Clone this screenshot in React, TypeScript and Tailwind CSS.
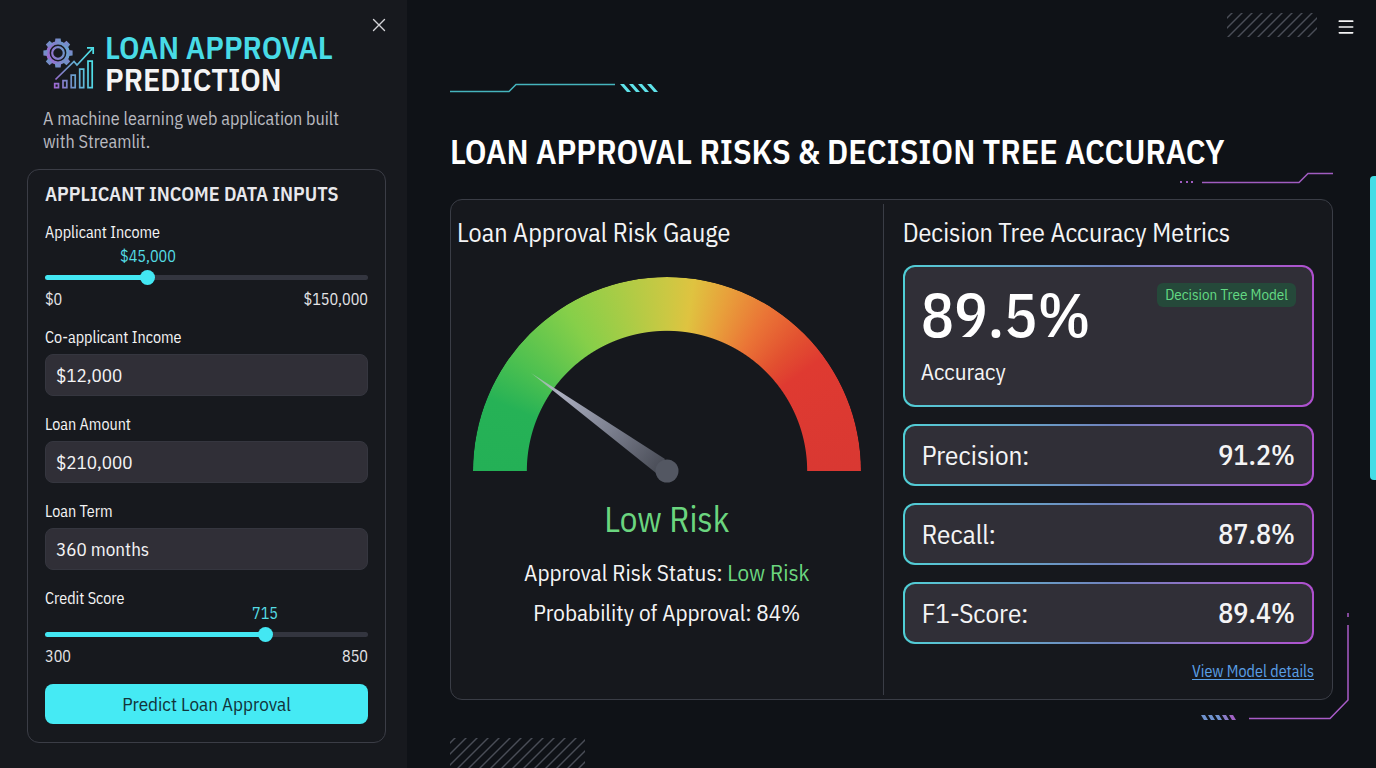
import { useState } from "react";
import { Menu } from "lucide-react";

const Logo = () => (
  <svg viewBox="0 0 52 52" className="w-[52px] h-[52px] shrink-0" fill="none" aria-hidden="true">
    <defs>
      <linearGradient id="logo" gradientUnits="userSpaceOnUse" x1="0" y1="34" x2="46" y2="22">
        <stop offset="0" stopColor="#b455d6" />
        <stop offset="0.5" stopColor="#7290c8" />
        <stop offset="1" stopColor="#4fdfe8" />
      </linearGradient>
      <mask id="gear">
        <rect width="52" height="52" fill="#fff" />
        <circle cx="15" cy="16" r="8.4" fill="#000" />
      </mask>
    </defs>
    <g fill="url(#logo)" mask="url(#gear)">
      <circle cx="15" cy="16" r="11.8" />
      {[0, 45, 90, 135, 180, 225, 270, 315].map(angle => (
        <path key={angle} d="M11.9 5.5 L12.4 1.4 H17.6 L18.1 5.5 Z" transform={`rotate(${angle} 15 16)`} />
      ))}
    </g>
    <circle cx="15" cy="16" r="5.8" stroke="url(#logo)" strokeWidth="2.2" />
    <g stroke="url(#logo)" strokeWidth="1.7">
      <path d="M12.5 42.5 L31 24.500 L34 28 L49.5 11.5" />
      <path d="M44 10.8 H50.2 V17" />
      <path d="M11.7 46.7 h3.8 v4 h-3.8 z" />
      <path d="M20 43.7 h3.8 v7 h-3.8 z" />
      <path d="M28.2 38.2 h4 v12.5 h-4 z" />
      <path d="M36.7 32.2 h4 v18.5 h-4 z" />
      <path d="M45 24.2 h4.2 v26.5 h-4.2 z" />
    </g>
  </svg>
);

const Hatch = ({ id, spacing, className }: any) => (
  <svg className={className} aria-hidden="true">
    <defs>
      <pattern id={id} width={spacing} height="12" patternUnits="userSpaceOnUse" patternTransform="skewX(-45)">
        <path d="M5 0 V12" stroke="#4a4d57" strokeWidth="2" />
      </pattern>
    </defs>
    <rect width="100%" height="100%" fill={`url(#${id})`} />
  </svg>
);

const SliderField = ({ id, label, readout, start, min, max, readoutClass }: any) => {
  const [position, setPosition] = useState(start);

  return (
    <div>
      <label htmlFor={id} className="block text-base leading-5">{label}</label>
      <div className={`relative h-5 ${readoutClass}`}>
        <output
          htmlFor={id}
          className="absolute -translate-x-1/2 text-base leading-5 text-[#55dce4]"
          style={{ left: `calc(${position}% + ${(50 - position) * 0.15}px)` }}
        >
          {readout}
        </output>
      </div>
      <input
        id={id}
        type="range"
        min={0}
        max={100}
        value={position}
        aria-valuetext={readout}
        onChange={e => setPosition(Number(e.target.value))}
        className="block mt-1 w-full h-[14px] appearance-none bg-transparent [&::-webkit-slider-runnable-track]:h-[5px] [&::-webkit-slider-runnable-track]:rounded-full [&::-webkit-slider-runnable-track]:bg-(image:--track) [&::-webkit-slider-thumb]:appearance-none [&::-webkit-slider-thumb]:-mt-[5px] [&::-webkit-slider-thumb]:size-[15px] [&::-webkit-slider-thumb]:rounded-full [&::-webkit-slider-thumb]:bg-[#43e7f3]"
        style={{ "--track": `linear-gradient(to right, #43e7f3 ${position}%, #33353f ${position}%)` } as any}
      />
      <div className="mt-[5px] flex justify-between text-base leading-5 text-[#e4e4e7]">
        <span>{min}</span>
        <span>{max}</span>
      </div>
    </div>
  );
};

const TextField = ({ id, label, value }: any) => (
  <div>
    <label htmlFor={id} className="block text-base leading-5">{label}</label>
    <input
      id={id}
      type="text"
      defaultValue={value}
      className="mt-[7px] block w-full h-[42px] rounded-lg border border-[#35363f] bg-[#302f37] px-2.5 text-[19px] text-[#f4f4f5]"
    />
  </div>
);

const MetricRow = ({ label, value }: any) => (
  <div className="rounded-xl bg-linear-to-r from-[#4fcfd6] via-[#6f83bd] to-[#b04fd0] p-[2px]">
    <dl className="flex h-[58px] items-center justify-between rounded-[10px] bg-[#302f37] px-[17px]">
      <dt className="text-[27px]">{label}</dt>
      <dd className="text-[28px] font-medium">{value}</dd>
    </dl>
  </div>
);

const Gauge = () => (
  <div className="relative mx-auto aspect-[2/1] w-[388px] max-w-full">
    <div className="h-full w-full rounded-t-full bg-[conic-gradient(from_270deg_at_50%_100%,#24b056_0deg,#26b256_22deg,#4cc050_36deg,#86cf49_58deg,#a9cc46_75deg,#cbc843_90deg,#dfc340_98deg,#e8a03b_109deg,#ea7536_122deg,#e25030_135deg,#df3a31_144deg,#d93832_180deg)] [mask-image:radial-gradient(farthest-side_at_50%_100%,transparent_72%,#000_72.5%)]" />
    <svg viewBox="0 0 388 206" className="absolute left-0 top-0 w-full overflow-visible" aria-hidden="true">
      <defs>
        <linearGradient id="needle" gradientUnits="userSpaceOnUse" x1="58" y1="96" x2="190" y2="192">
          <stop offset="0" stopColor="#c4c6d2" stopOpacity="0.5" />
          <stop offset="0.2" stopColor="#aeb1c2" />
          <stop offset="0.6" stopColor="#7b7f8e" />
          <stop offset="1" stopColor="#474a54" />
        </linearGradient>
      </defs>
      <path d="M58 96 L192 182 L183 196 Z" fill="url(#needle)" />
      <circle cx="194" cy="194" r="11.5" fill="#535762" />
    </svg>
  </div>
);

export default function App() {
  const metrics = [
    { label: "Precision:", value: "91.2%" },
    { label: "Recall:", value: "87.8%" },
    { label: "F1-Score:", value: "89.4%" }
  ];

  return (
    <div className="relative flex min-h-screen bg-[#0f1217] font-['IBM_Plex_Sans_Condensed','Roboto_Condensed',Roboto,sans-serif] text-[#f4f4f5]">
      <aside className="w-[407px] shrink-0 bg-[#17191e] pl-[27px] pr-[21px] pt-[18px] pb-6">
        <div className="flex justify-end">
          <button type="button" aria-label="Close sidebar" className="text-[#d4d4d8]">
            <svg viewBox="0 0 14 14" className="size-3.5" stroke="currentColor" strokeWidth="1.4" strokeLinecap="round">
              <path d="M1.500 1.500 L12.500 12.500 M12.500 1.500 L1.500 12.500" />
            </svg>
          </button>
        </div>

        <div className="-mt-px px-4">
          <div className="flex items-center gap-2.5">
            <Logo />
            <h1 className="text-[32px] font-semibold leading-8 whitespace-nowrap">
              <span className="block text-[#48dbe6]">LOAN APPROVAL</span>
              <span className="block">PREDICTION</span>
            </h1>
          </div>
          <p className="mt-3 text-lg leading-[23px] text-[#b9bac0]">
            A machine learning web application built with Streamlit.
          </p>
        </div>

        <form className="mt-4 rounded-xl border border-[#3b3d46] px-[17px] pt-3 pb-[18px]" onSubmit={e => e.preventDefault()}>
          <h2 className="text-xl font-semibold leading-6 text-[#e8e8ec]">APPLICANT INCOME DATA INPUTS</h2>
          <div className="mt-4 flex flex-col gap-[18px]">
            <SliderField id="income" label="Applicant Income" readout="$45,000" start={31} min="$0" max="$150,000" readoutClass="mt-1" />
            <TextField id="co-income" label="Co-applicant Income" value="$12,000" />
            <TextField id="amount" label="Loan Amount" value="$210,000" />
            <TextField id="term" label="Loan Term" value="360 months" />
            <SliderField id="score" label="Credit Score" readout="715" start={69} min="300" max="850" readoutClass="-mt-[5px]" />
            <button type="submit" className="h-10 rounded-lg bg-[#45eaf4] text-[19px] text-[#12343a]">
              Predict Loan Approval
            </button>
          </div>
        </form>
      </aside>

      <main className="flex min-w-0 flex-1 flex-col pl-[43px] pr-[43px]">
        <header className="-mr-[23px] flex items-center justify-end gap-[19px] pt-[13px]">
          <Hatch id="hatch-top" spacing="10" className="h-6 w-[90px]" />
          <button type="button" aria-label="Open menu" className="pt-1">
            <Menu className="size-5" />
          </button>
        </header>

        <svg viewBox="0 0 210 10" className="mt-[46px] h-2.5 w-[210px]" fill="none" aria-hidden="true">
          <path d="M0 8.5 H59 L66 1.5 H165" stroke="#45b4bd" strokeWidth="1.5" />
          <path d="M170 1 h4 l7 8 h-4 z M179 1 h4 l7 8 h-4 z M188 1 h4 l7 8 h-4 z M197 1 h4 l7 8 h-4 z" fill="#5fe3ea" />
        </svg>

        <h2 className="mt-[38px] text-[34px] font-semibold leading-10 text-white">
          LOAN APPROVAL RISKS &amp; DECISION TREE ACCURACY
        </h2>
        <svg viewBox="0 0 154 12" className="mt-px ml-auto h-3 w-[154px]" fill="none" stroke="#a05cc0" strokeWidth="1.5" aria-hidden="true">
          <path d="M1 10 h2 M7 10 h2 M12 10 h2" strokeWidth="2" />
          <path d="M23 10.5 H120 L129 1.5 H154" />
        </svg>

        <div className="relative mt-[15px]">
          <div className="grid grid-cols-[49fr_51fr] rounded-xl border border-[#3a3d46] bg-[#16181d]">
            <section className="px-1.5 pt-3.5 pb-[73px] text-center">
              <h3 className="text-left text-[26px] leading-9">Loan Approval Risk Gauge</h3>
              <div className="mt-[27px]">
                <Gauge />
              </div>
              <p className="mt-[26px] text-[35px] leading-[44px] text-[#6bd57f]">Low Risk</p>
              <p className="mt-[17px] text-[23px] leading-7">
                Approval Risk Status: <span className="text-[#6bd57f]">Low Risk</span>
              </p>
              <p className="mt-3 text-[23px] leading-7">Probability of Approval: 84%</p>
            </section>

            <section className="my-1 border-l border-[#3a3d46] pl-[19px] pr-[18px] pt-2.5">
              <h3 className="text-[26px] leading-9">Decision Tree Accuracy Metrics</h3>
              <div className="mt-[15px] flex flex-col gap-[17px]">
                <div className="rounded-xl bg-linear-to-r from-[#4fcfd6] via-[#6f83bd] to-[#b04fd0] p-[2px]">
                  <div className="flex h-[138px] items-start justify-between rounded-[10px] bg-[#302f37] px-4 pt-3">
                    <div>
                      <p className="text-[62px] font-medium leading-[70px] text-white">89.5%</p>
                      <p className="mt-1.5 text-[23px] leading-8">Accuracy</p>
                    </div>
                    <span className="mt-1 rounded-md bg-[#25493a] px-2 text-[15px] leading-6 text-[#63d883]">Decision Tree Model</span>
                  </div>
                </div>
                {metrics.map(metric => (
                  <MetricRow key={metric.label} {...metric} />
                ))}
              </div>
              <div className="mt-[15px] flex justify-end">
                <a href="#model" className="text-base leading-6 text-[#5a9fe6] underline underline-offset-2">View Model details</a>
              </div>
            </section>
          </div>

          <svg viewBox="0 0 150 110" className="absolute -right-[17px] -bottom-5 h-[110px] w-[150px]" fill="none" aria-hidden="true">
            <path d="M148 3 v4 M148 15 V90 L130 108.500 H49" stroke="#a95cc8" strokeWidth="1.5" />
            <path d="M1 105 h4 l3 5 h-4 z M8 105 h4 l3 5 h-4 z M15 105 h4 l3 5 h-4 z" fill="#6f92cf" />
            <path d="M22 105 h4 l3 5 h-4 z" fill="#8b7cc8" />
            <path d="M29 105 h4 l3 5 h-4 z" fill="#a062c4" />
          </svg>
        </div>

        <Hatch id="hatch-bottom" spacing="11" className="mt-auto h-[30px] w-[135px]" />
      </main>

      <div className="absolute right-0 top-44 h-[304px] w-1.5 rounded-l-sm bg-[#43dde6]" />
    </div>
  );
}
